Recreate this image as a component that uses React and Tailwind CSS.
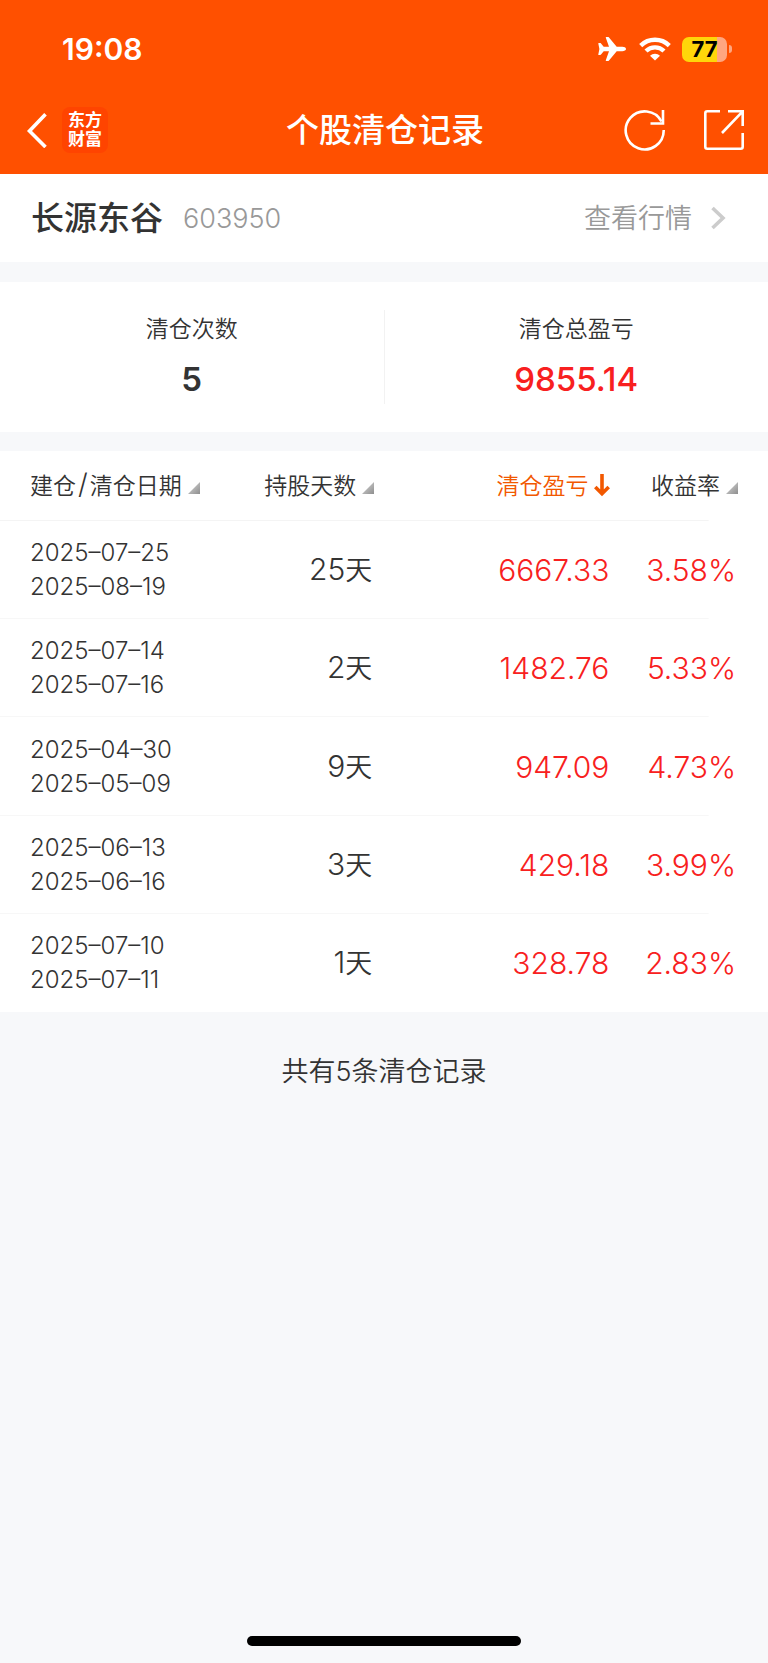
import clsx from "clsx";

const records = [
  { opened: "2025–07–25", closed: "2025–08–19", days: 25, profit: "6667.33", rate: "3.58%" },
  { opened: "2025–07–14", closed: "2025–07–16", days: 2, profit: "1482.76", rate: "5.33%" },
  { opened: "2025–04–30", closed: "2025–05–09", days: 9, profit: "947.09", rate: "4.73%" },
  { opened: "2025–06–13", closed: "2025–06–16", days: 3, profit: "429.18", rate: "3.99%" },
  { opened: "2025–07–10", closed: "2025–07–11", days: 1, profit: "328.78", rate: "2.83%" },
];

function SortCorner() {
  return (
    <svg viewBox="0 0 12 12" className="w-3 h-3 mt-1 shrink-0" aria-hidden="true">
      <defs>
        <linearGradient id="corner" x1="0" y1="0" x2="1" y2="1">
          <stop offset="0.3" stopColor="#c4c4c4" />
          <stop offset="1" stopColor="#8e8e8e" />
        </linearGradient>
      </defs>
      <path d="M12 0v12H0z" fill="url(#corner)" />
    </svg>
  );
}

function SortArrow() {
  return (
    <svg viewBox="0 0 16 24" className="w-4 h-6 shrink-0" fill="none" stroke="#f25800" strokeWidth="3.600" aria-hidden="true">
      <path d="M8 0v19M1.300 13L8 19.700l6.700-6.700" />
    </svg>
  );
}

function StatusBar() {
  return (
    <div className="flex items-center justify-between h-[98px] pl-[62px] pr-9">
      <span className="text-[30px] leading-none font-semibold">19:08</span>
      <div className="flex items-center">
        <svg viewBox="0 0 28 26" className="w-7 h-[26px] mr-[13px]" fill="currentColor" aria-label="飞行模式">
          <path d="M28 13c0 1.300-1.700 2.200-3.700 2.200h-5.600L11 24.500c-.3.400-.7.500-1.100.5H8.200c-.4 0-.6-.3-.4-.8l3.200-9H5.700L3 18.600c-.2.300-.5.400-.8.400H.8c-.4 0-.6-.2-.5-.6L1.400 13 .3 7.600C.2 7.200.4 7 .8 7h1.400c.3 0 .6.100.8.400l2.700 3.400H11l-3.200-9c-.2-.5 0-.8.400-.8h1.700c.4 0 .8.100 1.100.5l7.700 9.300h5.600c2 0 3.700.9 3.700 2.200z" />
        </svg>
        <svg viewBox="0 0 32 24" className="w-8 h-6 mr-[11px]" aria-label="无线网络">
          <path d="M1.700 8.600a20.500 20.500 0 0 1 28.600 0M7 14a13 13 0 0 1 18 0" fill="none" stroke="currentColor" strokeWidth="4.400" />
          <path d="M16 23.500l-5-4.800a7.200 7.200 0 0 1 10 0z" fill="currentColor" />
        </svg>
        <div className="flex items-center gap-[2px]">
          <div className="flex items-center justify-center w-[45px] h-[25px] rounded-[7px] bg-[linear-gradient(to_right,#ffd60a_77%,#ffa680_77%)] text-black text-[22px] leading-none font-bold">77</div>
          <div className="w-[3px] h-2 rounded-r-full bg-[#ffa680]" />
        </div>
      </div>
    </div>
  );
}

function NavBar() {
  return (
    <div className="grid grid-cols-[1fr_auto_1fr] items-center h-16 pl-[25px] pr-[23px]">
      <div className="flex items-center gap-[13px]">
        <button aria-label="返回">
          <svg viewBox="0 0 24 36" className="w-6 h-9" fill="none" stroke="currentColor" strokeWidth="3.600">
            <path d="M20.500 2.200L4.500 19l16 16" />
          </svg>
        </button>
        <a href="#home" className="flex flex-col items-center justify-center w-[46px] h-[46px] rounded-lg bg-[#ff4400] text-[17px] leading-[19px] font-bold">
          <span>东方</span>
          <span>财富</span>
        </a>
      </div>
      <h1 className="text-[33px] leading-none font-medium">个股清仓记录</h1>
      <div className="flex items-center justify-end gap-[37px]">
        <button aria-label="刷新">
          <svg viewBox="0 0 42 42" className="w-[42px] h-[42px]" fill="none" stroke="currentColor" strokeWidth="2.600">
            <path d="M39.700 21A19 19 0 1 1 37.500 12.500" />
            <path d="M39 1v13.500H26.500" />
          </svg>
        </button>
        <button aria-label="分享">
          <svg viewBox="0 0 42 42" className="w-[42px] h-[42px]" fill="none" stroke="currentColor" strokeWidth="2.600">
            <path d="M17 2.300H4.300a2 2 0 0 0-2 2v33.400a2 2 0 0 0 2 2h33.400a2 2 0 0 0 2-2V24" />
            <path d="M25 2.300h14.700V17M39.200 2.800L19 24" />
          </svg>
        </button>
      </div>
    </div>
  );
}

function HeadCell({ children, active, className, align }) {
  return (
    <th scope="col" className={clsx("p-0 font-[350]", className)} aria-sort={active ? "descending" : "none"}>
      <button className={clsx("flex items-center gap-[6px] w-full text-[23px] leading-8 whitespace-nowrap", align, active ? "text-[#f25800]" : "text-[#333]")}>
        <span>{children}</span>
        {active ? <SortArrow /> : <SortCorner />}
      </button>
    </th>
  );
}

export default function App() {
  return (
    <div className="flex flex-col min-h-screen bg-[#f7f8fa] text-[#333] font-['Inter','Noto_Sans_CJK_SC',sans-serif]">
      <header className="bg-[#ff5000] text-white pb-3">
        <StatusBar />
        <NavBar />
      </header>

      <section className="flex items-center justify-between h-22 pl-[31px] pr-10 bg-white">
        <div className="flex items-center gap-5">
          <h2 className="text-[33px] leading-none font-medium">长源东谷</h2>
          <span className="text-[27px] leading-none font-light text-[#999]">603950</span>
        </div>
        <a href="#quote" className="flex items-center gap-[18px] text-[27px] leading-none font-[350] text-[#999]">
          查看行情
          <svg viewBox="0 0 18 24" className="w-[18px] h-6" fill="none" stroke="#ccc" strokeWidth="3.600" aria-hidden="true">
            <path d="M2.500 2L13 12 2.500 22" />
          </svg>
        </a>
      </section>

      <section className="flex mt-5 py-[28px] h-[150px] bg-white">
        <div className="flex-1 flex flex-col items-center gap-3 border-r border-[#f2f2f2]">
          <span className="text-[23px] leading-[38px] font-[350]">清仓次数</span>
          <span className="text-[33px] leading-[38px] font-semibold">5</span>
        </div>
        <div className="flex-1 flex flex-col items-center gap-3">
          <span className="text-[23px] leading-[38px] font-[350]">清仓总盈亏</span>
          <span className="text-[33px] leading-[38px] font-medium text-[#f82020]">9855.14</span>
        </div>
      </section>

      <table className="w-full mt-[19px] table-fixed border-collapse bg-white">
        <thead>
          <tr className="h-[70px] bg-[linear-gradient(#f4f4f4,#f4f4f4)] bg-[length:calc(100%-59px)_1px] bg-[position:left_bottom] bg-no-repeat">
            <HeadCell className="w-[30%] pl-[30px]">建仓<span className="mx-[2px] text-[28px] leading-none font-light">/</span>清仓日期</HeadCell>
            <HeadCell className="w-[19%] pr-[2px]" align="justify-end">持股天数</HeadCell>
            <HeadCell className="w-[31%] pr-1" align="justify-end" active>清仓盈亏</HeadCell>
            <HeadCell className="pr-[30px]" align="justify-end">收益率</HeadCell>
          </tr>
        </thead>
        <tbody>
          {records.map(r => (
            <tr key={r.opened} className="h-[98px] nth-3:h-[99px] bg-[linear-gradient(#f7f7f7,#f7f7f7)] bg-[length:calc(100%-59px)_1px] bg-[position:left_bottom] bg-no-repeat last:bg-none text-right text-[30px] leading-10 font-[350]">
              <td className="p-0 pl-[30px] text-left text-2xl leading-[34px]">
                <div>{r.opened}</div>
                <div>{r.closed}</div>
              </td>
              <td className="p-0 pr-1">{r.days}<span className="text-[27px]">天</span></td>
              <td className="p-0 pr-[5px] text-[#f82020]">{r.profit}</td>
              <td className="p-0 pr-8 text-[#f82020]">{r.rate}</td>
            </tr>
          ))}
        </tbody>
      </table>

      <p className="mt-10 text-center text-[27px] leading-10 font-[350]">共有5条清仓记录</p>

      <div className="mt-auto mb-[17px] mx-auto w-[274px] h-[10px] rounded-full bg-black" />
    </div>
  );
}
